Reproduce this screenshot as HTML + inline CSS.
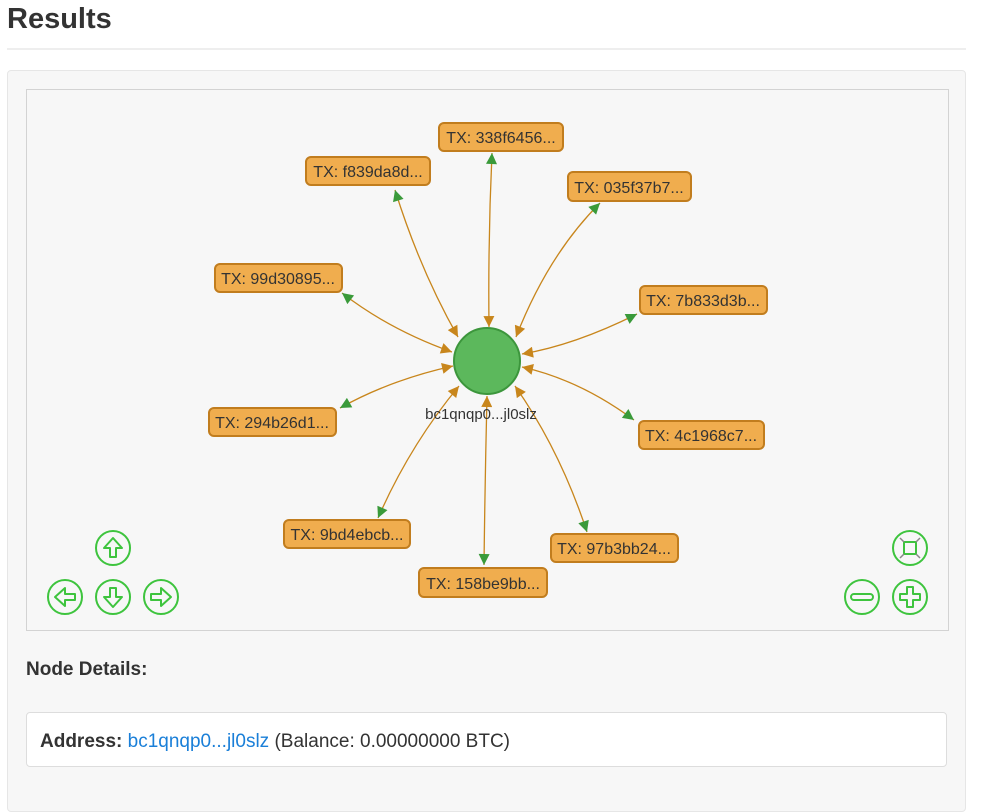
<!DOCTYPE html>
<html><head><meta charset="utf-8"><style>
body{margin:0;background:#fff;font-family:"Liberation Sans",Arial,sans-serif;color:#333;width:987px;height:791px;overflow:hidden;position:relative}
h1{position:absolute;left:7px;top:0;margin:0;font-size:29px;font-weight:bold;line-height:38px}
.hr{position:absolute;left:7px;top:48px;width:959px;height:2px;background:#eee}
.well{position:absolute;left:7px;top:70px;width:957px;height:740px;background:#f7f7f7;border:1px solid #e6e6e6;border-radius:4px}
.graph{position:absolute;left:26px;top:89px;width:921px;height:540px;border:1px solid #d3d3d3;background:#f7f7f7}
.nd{position:absolute;left:26px;top:659px;font-size:19px;font-weight:bold}
.addr{position:absolute;left:26px;top:712px;height:55px;background:#fff;border:1px solid #ddd;border-radius:4px;font-size:19px;line-height:57px;box-sizing:border-box;padding-left:13px;width:921px}
.addr a{color:#1a7fd8;text-decoration:none}
</style></head><body>
<h1>Results</h1>
<div class="hr"></div>
<div class="well"></div>
<div class="graph"></div>
<svg style="position:absolute;left:0;top:0" width="987" height="791" font-family="Liberation Sans, Arial, sans-serif">
<defs>
<marker id="g" viewBox="0 0 10 10" refX="10" refY="5" markerWidth="14" markerHeight="11" markerUnits="userSpaceOnUse" orient="auto-start-reverse"><path d="M0 0L10 5L0 10z" fill="#3a9a3a"/></marker>
<marker id="o" viewBox="0 0 10 10" refX="10" refY="5" markerWidth="14" markerHeight="11" markerUnits="userSpaceOnUse" orient="auto"><path d="M0 0L10 5L0 10z" fill="#c8861c"/></marker>
</defs>
<g fill="none" stroke="#c8861c" stroke-width="1.3">
<path d="M492 153 Q488 240 489 327" marker-start="url(#g)" marker-end="url(#o)"/>
<path d="M395 190 Q420 270 458 337" marker-start="url(#g)" marker-end="url(#o)"/>
<path d="M600 203 Q548 255 516 337" marker-start="url(#g)" marker-end="url(#o)"/>
<path d="M342 293 Q390 330 452 352" marker-start="url(#g)" marker-end="url(#o)"/>
<path d="M637 314 Q575 345 522 354" marker-start="url(#g)" marker-end="url(#o)"/>
<path d="M340 408 Q390 380 453 366" marker-start="url(#g)" marker-end="url(#o)"/>
<path d="M634 420 Q580 380 522 367" marker-start="url(#g)" marker-end="url(#o)"/>
<path d="M378 518 Q410 445 459 386" marker-start="url(#g)" marker-end="url(#o)"/>
<path d="M587 532 Q560 450 515 386" marker-start="url(#g)" marker-end="url(#o)"/>
<path d="M484 565 Q485 480 487 396" marker-start="url(#g)" marker-end="url(#o)"/>
</g>
<circle cx="487" cy="361" r="33" fill="#5cb85c" stroke="#3c963c" stroke-width="2"/>
<text x="481" y="419" font-size="15" text-anchor="middle" fill="#333">bc1qnqp0...jl0slz</text>
<g font-size="16" fill="#333" text-anchor="middle">
<g fill="#f0ad4e" stroke="#c17d1e" stroke-width="2">
<rect x="439" y="123" width="124" height="28" rx="5"/>
<rect x="306" y="157" width="124" height="28" rx="5"/>
<rect x="568" y="172" width="123" height="29" rx="5"/>
<rect x="215" y="264" width="127" height="28" rx="5"/>
<rect x="640" y="286" width="127" height="28" rx="5"/>
<rect x="209" y="408" width="127" height="28" rx="5"/>
<rect x="639" y="421" width="125" height="28" rx="5"/>
<rect x="284" y="520" width="126" height="28" rx="5"/>
<rect x="551" y="534" width="127" height="28" rx="5"/>
<rect x="419" y="568" width="128" height="29" rx="5"/>
</g>
<text x="501" y="143">TX: 338f6456...</text>
<text x="368" y="177">TX: f839da8d...</text>
<text x="629" y="193">TX: 035f37b7...</text>
<text x="278" y="284">TX: 99d30895...</text>
<text x="703" y="306">TX: 7b833d3b...</text>
<text x="272" y="428">TX: 294b26d1...</text>
<text x="701" y="441">TX: 4c1968c7...</text>
<text x="347" y="540">TX: 9bd4ebcb...</text>
<text x="614" y="554">TX: 97b3bb24...</text>
<text x="483" y="589">TX: 158be9bb...</text>
</g>
<g fill="none" stroke="#3ec43e" stroke-width="2">
<circle cx="113" cy="548" r="17"/><circle cx="65" cy="597" r="17"/><circle cx="113" cy="597" r="17"/><circle cx="161" cy="597" r="17"/>
<circle cx="910" cy="548" r="17"/><circle cx="862" cy="597" r="17"/><circle cx="910" cy="597" r="17"/>
<path d="M113 538 L104 548 H110 V557 H116 V548 H122 Z" stroke-linejoin="round"/>
<path d="M113 607 L104 597 H110 V588 H116 V597 H122 Z" stroke-linejoin="round"/>
<path d="M55 597 L65 588 V594 H75 V600 H65 V606 Z" stroke-linejoin="round"/>
<path d="M171 597 L161 588 V594 H151 V600 H161 V606 Z" stroke-linejoin="round"/>
<rect x="851" y="594" width="22" height="6" rx="3"/>
<path d="M907 587 H913 V594 H920 V600 H913 V607 H907 V600 H900 V594 H907 Z" stroke-linejoin="round"/>
<rect x="904" y="542" width="12" height="12"/>
</g>
<g stroke="#888" stroke-width="1.5"><path d="M900 538l4 4M920 538l-4 4M900 558l4-4M920 558l-4-4"/></g>
</svg>
<div class="nd">Node Details:</div>
<div class="addr"><b>Address:</b> <a>bc1qnqp0...jl0slz</a> (Balance: 0.00000000 BTC)</div>
</body></html>
